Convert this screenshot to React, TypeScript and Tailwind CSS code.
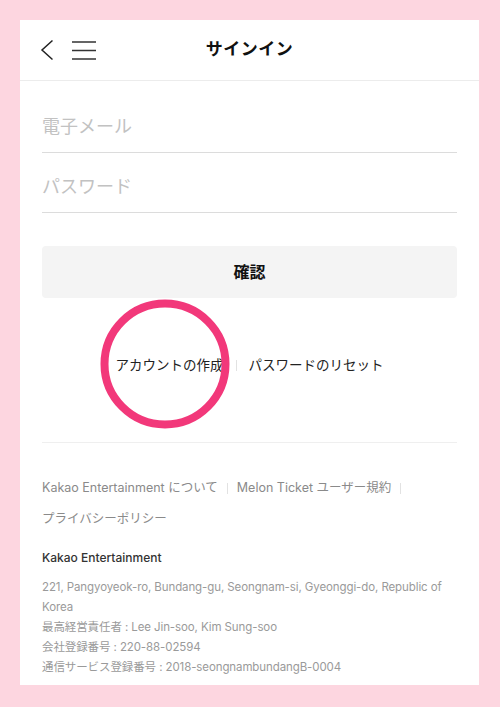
const FONT = { fontFamily: 'Inter, "Noto Sans CJK JP", sans-serif' }

function Sep({ className = '' }: { className?: string }) {
  return <span className={`inline-block w-px h-[11px] bg-[#e2e2e2] ${className}`} />
}

export default function App() {
  return (
    <div className="min-h-[707px] bg-[#fdd6e0] pt-[20px] pb-[23px]" style={FONT}>
      <div className="ml-[20px] w-[459px] bg-white">
        {/* header */}
        <div className="grid grid-cols-[1fr_auto_1fr] items-center h-[61px] border-b border-[#ececec]">
          <div className="flex items-center pl-[20px] gap-[18px]">
            <svg width="14" height="22" viewBox="0 0 14 22" fill="none">
              <path d="M12.5 1.5L2 11L12.5 20.5" stroke="#222" strokeWidth="1.5" />
            </svg>
            <svg width="24" height="20" viewBox="0 0 24 20" fill="none">
              <path d="M0 2h24M0 10.5h24M0 19h24" stroke="#333" strokeWidth="1.6" />
            </svg>
          </div>
          <div className="text-[17px] font-bold text-[#111] tracking-[0.5px]">サインイン</div>
          <div />
        </div>

        <div className="px-[22px] pt-[12px]">
          <div className="flex items-end h-[60px] pb-[12px] border-b border-[#dcdcdc]">
            <span className="text-[18px] leading-[26px] text-[#c2c2c2]">電子メール</span>
          </div>
          <div className="flex items-end h-[60px] pb-[12px] border-b border-[#dcdcdc]">
            <span className="text-[18px] leading-[26px] text-[#c2c2c2]">パスワード</span>
          </div>

          <div className="mt-[33px] h-[52px] rounded-[4px] bg-[#f4f4f4] flex items-center justify-center text-[16px] font-bold text-[#111]">
            確認
          </div>

          <div className="mt-[57px] h-[20px] flex items-center justify-center text-[13.5px] text-[#222]">
            <span className="relative">
              アカウントの作成
              <svg
                className="absolute -left-[16px] -top-[56px] pointer-events-none"
                width="130"
                height="130"
                viewBox="0 0 130 130"
                fill="none"
              >
                <circle cx="65" cy="65" r="60.5" stroke="#f2387a" strokeWidth="8" />
              </svg>
            </span>
            <Sep className="mx-[12px]" />
            <span>パスワードのリセット</span>
          </div>

          <div className="mt-[67px] border-t border-[#efefef]" />

          <div className="pt-[35px] pb-[8px]">
            <div className="flex items-center h-[20px] text-[12.5px] text-[#8a8a8a] whitespace-nowrap">
              <span>Kakao Entertainment について</span>
              <Sep className="mx-[9px]" />
              <span>Melon Ticket ユーザー規約</span>
              <Sep className="mx-[9px]" />
            </div>
            <div className="mt-[11px] h-[20px] flex items-center text-[12.5px] text-[#8a8a8a]">
              プライバシーポリシー
            </div>
            <div className="mt-[19px] h-[20px] flex items-center text-[12px] font-medium text-[#333]">
              Kakao Entertainment
            </div>
            <div className="mt-[9px] text-[11.5px] leading-[20px] tracking-[-0.1px] text-[#9a9a9a] whitespace-nowrap">
              221, Pangyoyeok-ro, Bundang-gu, Seongnam-si, Gyeonggi-do, Republic of
              <br />
              Korea
              <br />
              最高経営責任者 : Lee Jin-soo, Kim Sung-soo
              <br />
              会社登録番号 : 220-88-02594
              <br />
              通信サービス登録番号 : 2018-seongnambundangB-0004
            </div>
          </div>
        </div>
      </div>
    </div>
  )
}
